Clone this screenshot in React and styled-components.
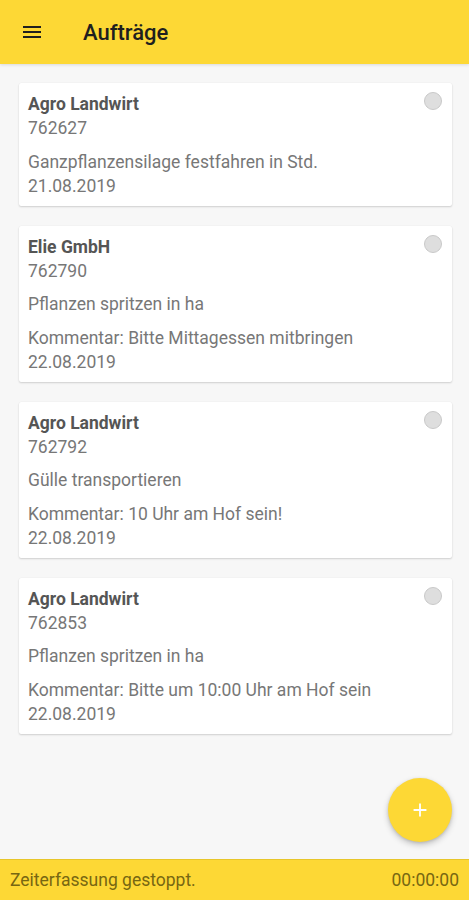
import React from "react";
import styled, { createGlobalStyle } from "styled-components";

const GlobalStyle = createGlobalStyle`
  html, body {
    margin: 0;
    padding: 0;
    background: #f7f7f7;
    font-family: Roboto, "Noto Sans", "Liberation Sans", sans-serif;
  }
`;

const Screen = styled.div`
  position: relative;
  width: 469px;
  height: 900px;
  display: flex;
  flex-direction: column;
  background: #f7f7f7;
  overflow: hidden;
`;

const TopBar = styled.header`
  height: 64px;
  flex-shrink: 0;
  display: flex;
  align-items: center;
  background: #fdd835;
  box-shadow: 0 1px 3px rgba(0, 0, 0, 0.12);
`;

const MenuButton = styled.div`
  width: 24px;
  height: 24px;
  margin-left: 20px;
  display: flex;
  align-items: center;
  justify-content: center;
`;

const Title = styled.h1`
  margin: 0 0 0 39px;
  font-size: 22px;
  font-weight: 500;
  color: #1f1f1f;
`;

const List = styled.main`
  flex: 1;
  display: flex;
  flex-direction: column;
  gap: 20px;
  padding: 19px 17px 0 19px;
`;

const Card = styled.div`
  position: relative;
  background: #fff;
  border-radius: 2px;
  padding: 9px 40px 8px 9px;
  box-shadow: 0 1px 2px rgba(0, 0, 0, 0.16), 0 0 1px rgba(0, 0, 0, 0.08);
  display: flex;
  flex-direction: column;
  gap: 9.5px;
`;

const Block = styled.div`
  display: flex;
  flex-direction: column;
`;

const Line = styled.div`
  font-size: 17.5px;
  line-height: 24px;
  white-space: nowrap;
  color: ${(p) => (p.$strong ? "#555" : "#777")};
  font-weight: ${(p) => (p.$strong ? 700 : 400)};
`;

const Radio = styled.span`
  position: absolute;
  top: 9px;
  right: 10px;
  width: 16px;
  height: 16px;
  border-radius: 50%;
  background: #dedede;
  border: 1px solid #c9c9c9;
`;

const Fab = styled.button`
  position: absolute;
  right: 17px;
  bottom: 58px;
  width: 64px;
  height: 64px;
  border: none;
  border-radius: 50%;
  background: #fdd835;
  box-shadow: 0 3px 6px rgba(0, 0, 0, 0.2), 0 1px 3px rgba(0, 0, 0, 0.12);
  display: flex;
  align-items: center;
  justify-content: center;
  padding: 0;
`;

const StatusBar = styled.footer`
  height: 40px;
  flex-shrink: 0;
  display: flex;
  align-items: center;
  justify-content: space-between;
  padding: 0 10px;
  background: #fdd835;
  border-top: 1px solid #e8c62a;
  font-size: 17.5px;
  color: #776712;
`;

const orders = [
  {
    customer: "Agro Landwirt",
    number: "762627",
    task: "Ganzpflanzensilage festfahren in Std.",
    date: "21.08.2019",
  },
  {
    customer: "Elie GmbH",
    number: "762790",
    task: "Pflanzen spritzen in ha",
    comment: "Bitte Mittagessen mitbringen",
    date: "22.08.2019",
  },
  {
    customer: "Agro Landwirt",
    number: "762792",
    task: "Gülle transportieren",
    comment: "10 Uhr am Hof sein!",
    date: "22.08.2019",
  },
  {
    customer: "Agro Landwirt",
    number: "762853",
    task: "Pflanzen spritzen in ha",
    comment: "Bitte um 10:00 Uhr am Hof sein",
    date: "22.08.2019",
  },
];

function OrderCard({ order }) {
  return (
    <Card>
      <Radio />
      <Block>
        <Line $strong>{order.customer}</Line>
        <Line>{order.number}</Line>
      </Block>
      {order.comment ? (
        <>
          <Line>{order.task}</Line>
          <Block>
            <Line>Kommentar: {order.comment}</Line>
            <Line>{order.date}</Line>
          </Block>
        </>
      ) : (
        <Block>
          <Line>{order.task}</Line>
          <Line>{order.date}</Line>
        </Block>
      )}
    </Card>
  );
}

export default function App() {
  return (
    <>
      <GlobalStyle />
      <Screen>
        <TopBar>
          <MenuButton>
            <svg width="24" height="24" viewBox="0 0 24 24">
              <path d="M3 18h18v-2H3v2zm0-5h18v-2H3v2zm0-7v2h18V6H3z" fill="#1f1f1f" />
            </svg>
          </MenuButton>
          <Title>Aufträge</Title>
        </TopBar>
        <List>
          {orders.map((o) => (
            <OrderCard key={o.number} order={o} />
          ))}
        </List>
        <Fab aria-label="Neu">
          <svg width="22" height="22" viewBox="0 0 24 24">
            <path d="M19 13h-6v6h-2v-6H5v-2h6V5h2v6h6v2z" fill="#fff" />
          </svg>
        </Fab>
        <StatusBar>
          <span>Zeiterfassung gestoppt.</span>
          <span>00:00:00</span>
        </StatusBar>
      </Screen>
    </>
  );
}
